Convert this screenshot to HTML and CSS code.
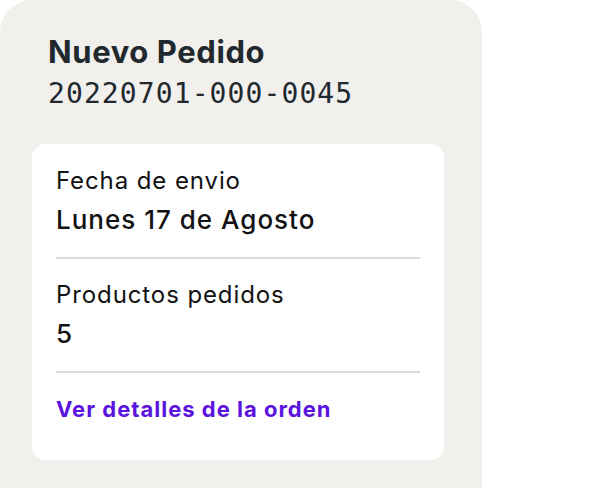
FILE: index.html
```html
<!DOCTYPE html>
<html lang="es">
<head>
<meta charset="utf-8">
<link rel="stylesheet" href="styles.css">
</head>
<body>
<section class="panel">
  <header class="head">
    <h1 class="title">Nuevo Pedido</h1>
    <div class="code">20220701-000-0045</div>
  </header>
  <div class="card">
    <div class="row">
      <div class="label">Fecha de envio</div>
      <div class="value">Lunes 17 de Agosto</div>
    </div>
    <div class="row">
      <div class="label">Productos pedidos</div>
      <div class="value">5</div>
    </div>
    <a class="link" href="#">Ver detalles de la orden</a>
  </div>
</section>
</body>
</html>
```

FILE: styles.css
```css
html, body {
  margin: 0;
  padding: 0;
  background: #ffffff;
}
body {
  font-family: "Inter", "Noto Sans", sans-serif;
  width: 608px;
  height: 488px;
  overflow: hidden;
}
.panel {
  box-sizing: border-box;
  width: 482px;
  height: 540px;
  background: #f1f0ed;
  border-radius: 32px 32px 0 0;
  padding: 34px 38px 0 32px;
}
.head {
  padding-left: 16px;
  margin-bottom: 30px;
}
.title {
  margin: 0;
  font-size: 31px;
  font-weight: 700;
  letter-spacing: 0.6px;
  line-height: 36px;
  color: #22292e;
}
.code {
  margin-top: 4px;
  font-family: "DejaVu Sans Mono", monospace;
  font-size: 28px;
  letter-spacing: 1.1px;
  line-height: 40px;
  color: #22292e;
}
.card {
  background: #ffffff;
  border-radius: 14px;
  padding: 22px 24px 36px;
  display: flex;
  flex-direction: column;
}
.row {
  border-bottom: 2px solid #dadada;
  padding-bottom: 19px;
  margin-bottom: 21px;
}
.label {
  font-size: 24px;
  letter-spacing: 0.9px;
  line-height: 30px;
  color: #121212;
}
.value {
  margin-top: 6px;
  font-size: 26px;
  font-weight: 500;
  letter-spacing: 1px;
  line-height: 36px;
  color: #121212;
}
.link {
  font-size: 22px;
  font-weight: 700;
  letter-spacing: 1px;
  line-height: 30px;
  color: #5b13e0;
  text-decoration: none;
}
```
